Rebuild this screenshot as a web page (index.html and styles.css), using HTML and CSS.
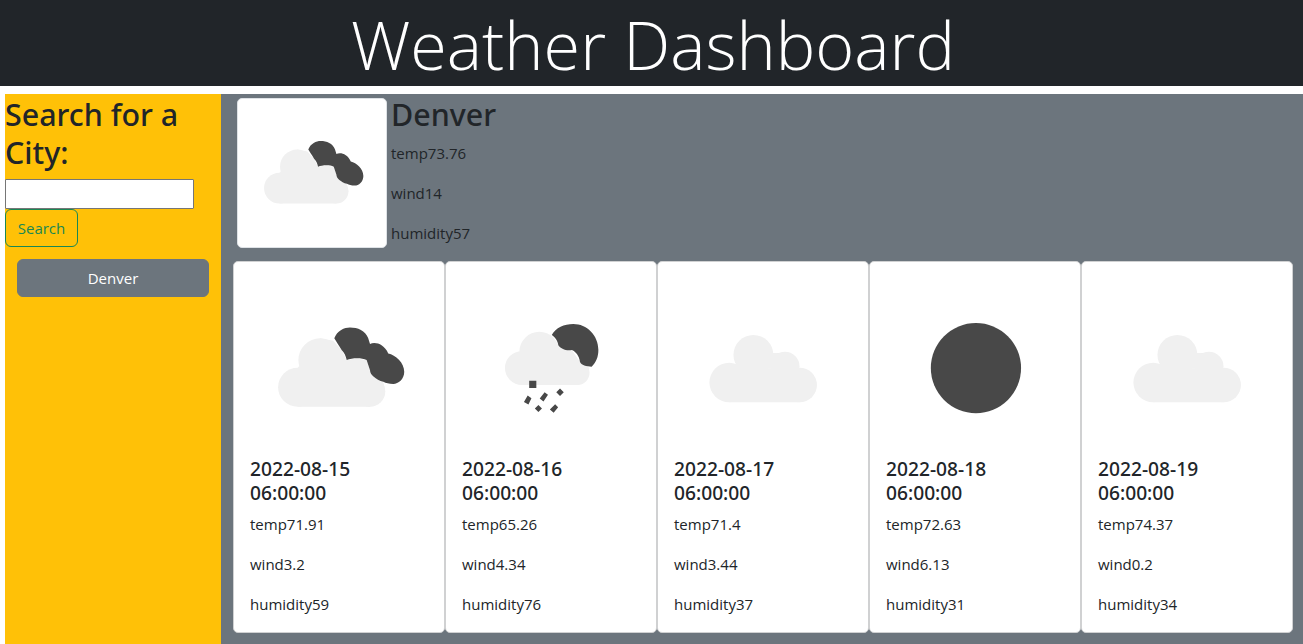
FILE: index.html
```html
<!DOCTYPE html>
<html>
<head>
    <title>Weather Dashboard</title>
    <meta charset="utf-8">
    <link rel="stylesheet" href="styles.css">
</head>
<body>

    <!-- shared weather icons, 100x100 like the api pngs -->
    <svg class="defs" width="0" height="0">
        <defs>
            <g id="cloud-wide">
                <g class="cloud">
                    <circle cx="28" cy="60.2" r="10.4"/>
                    <circle cx="39.9" cy="45.7" r="11.5"/>
                    <circle cx="66.5" cy="62.5" r="8.1"/>
                    <path d="M28 50 L40 34.2 L46.9 35.5 L51.4 40.4 L54.1 45.7 L59.4 44.9 L64.7 45.7 L66.5 51.1 L73.6 57.3 L74.6 62.5 L66.5 70.6 L28 70.6 Z"/>
                </g>
                <path class="dark" d="M47.5 34.2 C49 30 53 28.4 55.8 28.4 C60 28.4 64 30 65.5 34 L66.5 37.2 C69 35.8 74 37 76.2 42.2 C80 43 84.7 47 84.7 52 C84.7 56 81.5 58.5 78.9 58.5 C76.5 58.5 75 58 73.6 57.3 C69.5 56 66.5 53.5 66.5 51.1 L64.7 45.7 C62 44.3 57 44.5 54.1 45.7 C53.5 43.5 53 42 51.4 40.4 C50 38 48.5 36 47.5 34.2 Z"/>
            </g>
            <g id="snow-night">
                <g class="cloud">
                    <circle cx="34.5" cy="50" r="9"/>
                    <circle cx="43.8" cy="41.3" r="10.6"/>
                    <circle cx="64" cy="52.5" r="6.5"/>
                    <path d="M34.5 41 L44 31 L50.4 33 L53.9 37.8 L61 40.4 L65.4 46.6 L70.5 50 L65 59 L34.5 59 Z"/>
                </g>
                <path class="dark" d="M50.4 32.4 C52.5 28.6 57 26.6 61.9 26.6 C69 26.6 75.2 32.5 75.2 40.4 C75.2 44 74 47 71.6 49.3 C69 49 66 48.5 65.4 46.6 C65 43.5 63 41 61 40.4 C58 41 55 39.5 53.9 37.8 C53.5 35 52 33.5 50.4 32.4 Z"/>
                <path class="dark" d="M38.4 56.8 L42.2 56.8 L42.2 60.6 L38.4 60.6 Z M37.6 64.6 L39.6 66 L38 69.4 L35.6 68 Z M46.6 62.8 L48.4 64.2 L46 67.8 L44 66.2 Z M54.8 60.9 L56.8 62.9 L54.8 64.9 L52.8 62.9 Z M43.3 69.6 L45.2 71.5 L43.3 73.4 L41.4 71.5 Z M52.2 69.2 L53.8 70.8 L51.4 73.8 L49.4 72 Z"/>
            </g>
            <g id="cloud">
                <g class="cloud">
                    <circle cx="32" cy="57.7" r="10.5"/>
                    <circle cx="44.9" cy="43" r="10.6"/>
                    <circle cx="61.7" cy="49" r="7.7"/>
                    <circle cx="69.5" cy="59" r="9.2"/>
                    <rect x="32" y="50" width="37.5" height="18.2"/>
                    <rect x="40" y="42" width="22" height="8"/>
                </g>
            </g>
            <g id="clear-night">
                <circle class="dark" cx="50.5" cy="50" r="24"/>
            </g>
        </defs>
    </svg>

    <header class="top-bar">
        <h1>Weather Dashboard</h1>
    </header>

    <div class="page">
        <aside class="search-side">
            <h2>Search for a City:</h2>
            <input class="city-input" type="text">
            <button class="btn btn-search">Search</button>
            <div class="history">
                <button class="btn btn-city">Denver</button>
            </div>
        </aside>

        <main class="forecast-side">
            <section class="today">
                <div class="thumb">
                    <svg viewBox="0 0 100 100"><use href="#cloud-wide"/></svg>
                </div>
                <div class="today-text">
                    <h2>Denver</h2>
                    <p>temp73.76</p>
                    <p>wind14</p>
                    <p>humidity57</p>
                </div>
            </section>

            <section class="cards">
                <div class="card">
                    <svg class="card-icon" viewBox="0 -6.4 100 95.7"><use href="#cloud-wide"/></svg>
                    <h5>2022-08-15 06:00:00</h5>
                    <p>temp71.91</p>
                    <p>wind3.2</p>
                    <p>humidity59</p>
                </div>
                <div class="card">
                    <svg class="card-icon" viewBox="0 -6.4 100 95.7"><use href="#snow-night"/></svg>
                    <h5>2022-08-16 06:00:00</h5>
                    <p>temp65.26</p>
                    <p>wind4.34</p>
                    <p>humidity76</p>
                </div>
                <div class="card">
                    <svg class="card-icon" viewBox="0 -6.4 100 95.7"><use href="#cloud"/></svg>
                    <h5>2022-08-17 06:00:00</h5>
                    <p>temp71.4</p>
                    <p>wind3.44</p>
                    <p>humidity37</p>
                </div>
                <div class="card">
                    <svg class="card-icon" viewBox="0 -6.4 100 95.7"><use href="#clear-night"/></svg>
                    <h5>2022-08-18 06:00:00</h5>
                    <p>temp72.63</p>
                    <p>wind6.13</p>
                    <p>humidity31</p>
                </div>
                <div class="card">
                    <svg class="card-icon" viewBox="0 -6.4 100 95.7"><use href="#cloud"/></svg>
                    <h5>2022-08-19 06:00:00</h5>
                    <p>temp74.37</p>
                    <p>wind0.2</p>
                    <p>humidity34</p>
                </div>
            </section>
        </main>
    </div>

</body>
</html>
```

FILE: styles.css
```css
html, body {
    height: 100%;
}

body {
    margin: 0;
    display: flex;
    flex-direction: column;
    overflow: hidden;
    background-color: #ffffff;
    color: #212529;
    font-family: "Open Sans", "Noto Sans", sans-serif;
    font-size: 15px;
    line-height: 24px;
}

.defs {
    position: absolute;
}

.cloud {
    fill: #f0f0f0;
}

.dark {
    fill: #484848;
}

h2 {
    margin: 0 0 8px;
    font-family: "Noto Sans", sans-serif;
    font-size: 30.4px;
    font-weight: 500;
    line-height: 38.4px;
}

p {
    margin: 0 0 16px;
}

/* header */
.top-bar {
    box-sizing: border-box;
    height: 86px;
    margin-bottom: 8px;
    padding: 2px 0 0 3px;
    background-color: #212529;
    color: #ffffff;
    text-align: center;
}

.top-bar h1 {
    margin: 0;
    font-size: 66.5px;
    font-weight: 300;
    line-height: 84px;
}

.page {
    flex: 1;
    display: flex;
    padding-left: 5px;
    min-height: 0;
}

/* left side */
.search-side {
    width: 216px;
    background-color: #ffc107;
}

.search-side h2 {
    margin-bottom: 6px;
    padding-top: 2px;
}

.city-input {
    display: block;
    box-sizing: border-box;
    width: 189px;
    height: 30px;
    margin: 0;
    padding: 1px 2px;
    border: 1px solid #767676;
    border-radius: 1px;
    background: #ffffff;
}

.btn {
    box-sizing: border-box;
    height: 38px;
    font-family: inherit;
    font-size: 15px;
    border-radius: 6px;
    cursor: pointer;
}

.btn-search {
    display: block;
    width: 73px;
    padding: 0;
    border: 1px solid #198754;
    background: transparent;
    color: #198754;
}

.history {
    padding: 12px 12px 0;
}

.btn-city {
    display: block;
    width: 100%;
    border: 1px solid #6c757d;
    background-color: #6c757d;
    color: #ffffff;
}

/* right side */
.forecast-side {
    flex: 1;
    padding-left: 12px;
    background-color: #6c757d;
}

.today {
    box-sizing: border-box;
    display: flex;
    height: 167px;
    padding: 4px 0 0 4px;
}

.thumb {
    box-sizing: border-box;
    width: 150px;
    height: 150px;
    margin-right: 4px;
    border: 1px solid #dee2e6;
    border-radius: 5px;
    background-color: #ffffff;
}

.thumb svg {
    display: block;
    width: 148px;
    height: 148px;
    filter: blur(0.5px);
}

.today-text {
    margin-top: -2px;
}

.today-text h2 {
    margin-bottom: 7px;
}

.cards {
    display: grid;
    grid-template-columns: repeat(5, 212px);
}

.card {
    box-sizing: border-box;
    height: 372px;
    padding: 0 16px;
    border: 1px solid #d0d1d2;
    border-radius: 5px;
    background-color: #ffffff;
}

.card-icon {
    display: block;
    width: 188px;
    height: 180px;
    margin: 0 -5px 15px;
    filter: blur(0.6px);
}

.card h5 {
    max-width: 150px;
    margin: 0 0 7px;
    font-family: "Noto Sans", sans-serif;
    font-size: 19.2px;
    font-weight: 500;
    line-height: 24px;
}
```
